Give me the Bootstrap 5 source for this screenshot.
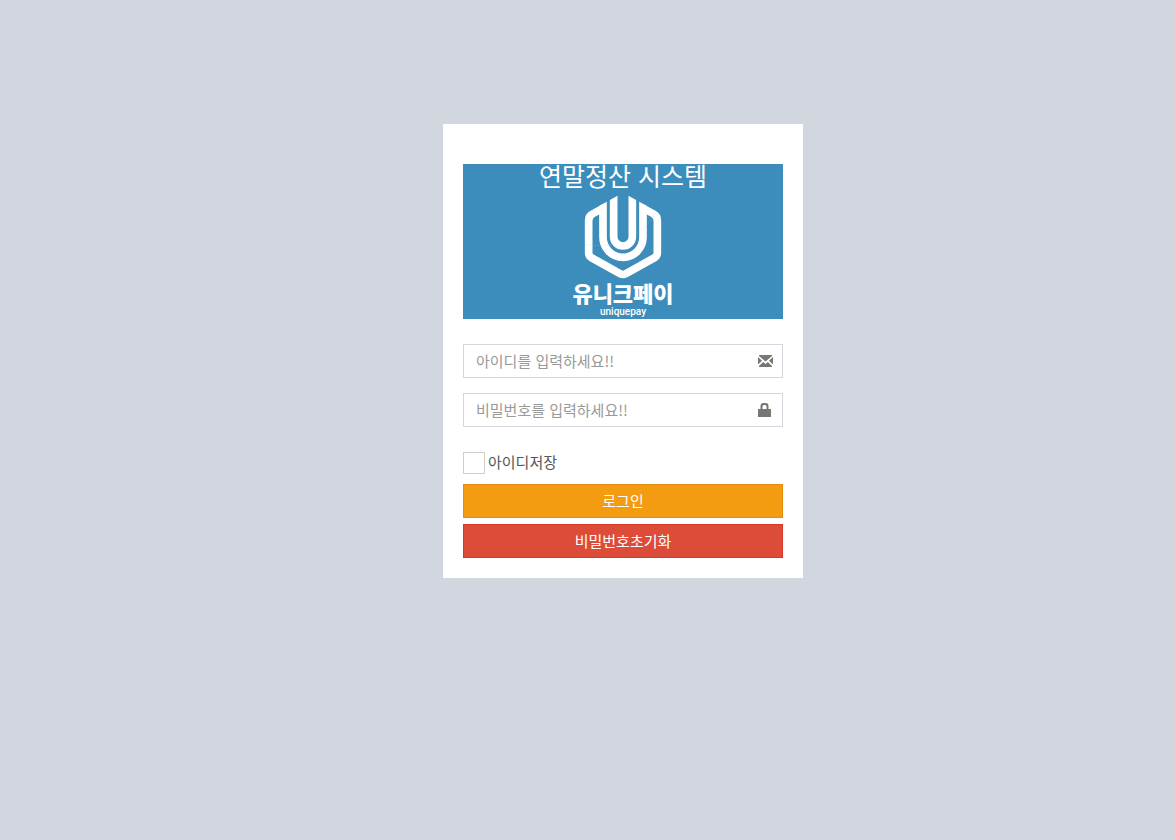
<!DOCTYPE html>
<html lang="ko">
<head>
<meta charset="utf-8">
<meta name="viewport" content="width=device-width, initial-scale=1">
<title>연말정산 시스템</title>
<link href="https://cdn.jsdelivr.net/npm/bootstrap@5.3.0/dist/css/bootstrap.min.css" rel="stylesheet">
<style>
body{background:#d2d6de;font-family:"Noto Sans CJK KR",sans-serif;font-size:15px;line-height:20px;color:#555}
.login-area{padding:124px 0 0 71px}
.login-box{width:360px;max-width:100%;background:#fff;padding:40px 20px 20px}
.brand{background:#3c8dbc;height:155px;margin-bottom:25px}
.brand h1{font-size:25px;line-height:22px;font-weight:400;margin:0 0 4px}
.emblem{width:96px;height:94px;margin-bottom:-3px}
.brand-name{font-size:22px;line-height:22px;font-weight:900}
.brand-sub{font-family:Roboto,sans-serif;font-size:10px;line-height:10px;font-weight:500;margin-top:4px}
.login-box .form-control{height:34px;padding:5px 42px 7px 12px;border:1px solid #d2d6de;border-radius:0;font-size:15px;line-height:20px;color:#555}
.login-box .form-control::placeholder{color:#999;opacity:1}
.field{margin-bottom:15px}
.field svg{position:absolute;right:9px;top:9px;width:16px;height:16px;fill:#777;pointer-events:none}
.save{margin:25px 0 10px;gap:3px}
.save label{padding-bottom:2px}
.login-box .form-check-input{width:22px;height:22px;margin:0;border:1px solid #d0cec8;border-radius:0}
.login-box .btn{height:34px;padding:6px 12px;border-radius:0;font-size:15px;line-height:20px;color:#fff}
.btn-login{background:#f39c12;border-color:#e08e0b}
.btn-reset{background:#dd4b39;border-color:#d73925}
.actions{gap:6px}
</style>
</head>
<body>
<main class="login-area d-flex justify-content-center">
  <form class="login-box">
    <div class="brand d-flex flex-column align-items-center text-white">
      <h1>연말정산 시스템</h1>
      <svg class="emblem flex-shrink-0" viewBox="0 0 288 282" aria-hidden="true">
        <clipPath id="roof"><path d="M0 88 144 8 288 88V282H0z"/></clipPath>
        <g clip-path="url(#roof)" fill="none" stroke="#fff" stroke-width="23">
          <path d="M88 52 53 71Q41 78 41 92V188Q41 198 49 203L135 251Q144 256 153 251L239 203Q247 198 247 188V92Q247 78 235 71L200 52"/>
          <path d="M84 20V142A60 60 0 0 0 204 142V20"/>
          <path d="M116 5V140A28 28 0 0 0 172 140V5"/>
        </g>
        <path d="M32 164Q75 169 112 164M182 130Q235 100 242 55" fill="none" stroke="#9cc6df" stroke-width="1" stroke-dasharray="5 4"/>
      </svg>
      <div class="brand-name">유니크페이</div>
      <div class="brand-sub">uniquepay</div>
    </div>
    <div class="field position-relative">
      <input type="text" class="form-control" aria-label="아이디" placeholder="아이디를 입력하세요!!">
      <svg viewBox="0 0 16 16" aria-hidden="true"><path d="M1 2H14V3L7.500 8.500 1 3zM0 4 4 7.800 0 11.500zM15 4V11.500L11 7.800zM1 14V13L5.200 9 7.500 11 9.800 9 14 13V14z"/></svg>
    </div>
    <div class="field position-relative">
      <input type="password" class="form-control" aria-label="비밀번호" placeholder="비밀번호를 입력하세요!!">
      <svg viewBox="0 0 16 16" aria-hidden="true"><path fill-rule="evenodd" d="M2.500 7V4Q2.500 1 5.500 1H7.500Q10.500 1 10.500 4V7H12.500Q13 7 13 7.500V14.500Q13 15 12.500 15H.5Q0 15 0 14.500V7.500Q0 7 .5 7zM4.500 7H8.500V4.500Q8.500 3 7 3H6Q4.500 3 4.500 4.500z"/></svg>
    </div>
    <div class="save d-flex align-items-center">
      <input class="form-check-input" type="checkbox" id="saveId">
      <label for="saveId">아이디저장</label>
    </div>
    <div class="actions d-grid">
      <button type="button" class="btn btn-login">로그인</button>
      <button type="button" class="btn btn-reset">비밀번호초기화</button>
    </div>
  </form>
</main>
<script src="https://cdn.jsdelivr.net/npm/bootstrap@5.3.0/dist/js/bootstrap.bundle.min.js"></script>
</body>
</html>
